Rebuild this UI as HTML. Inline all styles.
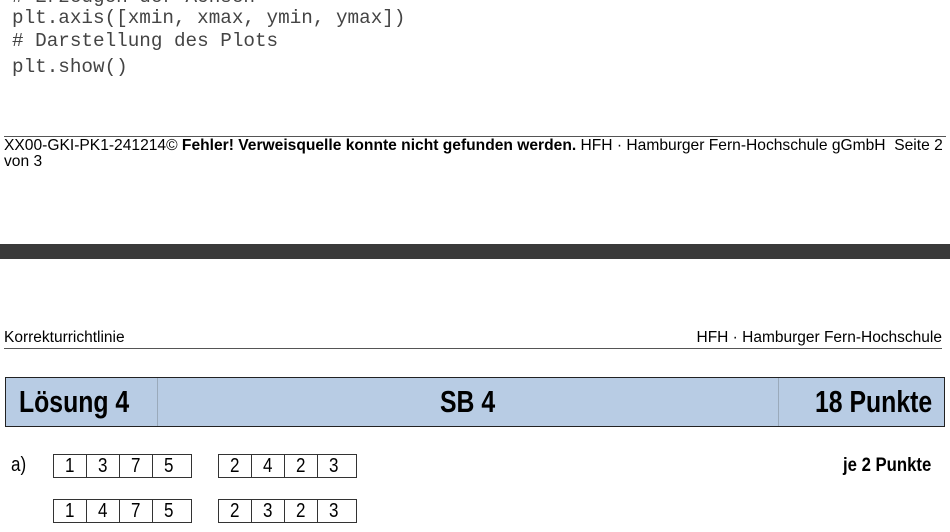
<!DOCTYPE html>
<html><head><meta charset="utf-8"><style>
body{margin:0;width:950px;height:532px;background:#fff;position:relative;overflow:hidden;font-family:"Liberation Sans",Arial,sans-serif;color:#000}
.a{position:absolute;white-space:nowrap}
.code{font-family:"Liberation Mono",monospace;font-size:19.3px;color:#444}
.n{font-weight:bold;transform-origin:0 0}
.cells{position:absolute;display:flex;height:22px;border:1px solid #333;border-right:none}
.cells div{width:33px;border-right:1px solid #333;font-size:20px;line-height:22px;padding-left:11px;box-sizing:border-box;font-family:"Liberation Sans",Arial,sans-serif}
.cells div:last-child{width:39px}
.cells span{display:inline-block;transform:scaleX(.85);transform-origin:0 0;font-family:"Liberation Sans",Arial,sans-serif}
</style></head><body>
<div class="a code" style="left:12px;top:-14px"># Erzeugen der Achsen</div>
<div class="a code" style="left:12px;top:7px">plt.axis([xmin, xmax, ymin, ymax])</div>
<div class="a code" style="left:12px;top:30px"># Darstellung des Plots</div>
<div class="a code" style="left:12px;top:56px">plt.show()</div>
<div class="a" style="left:4px;top:136px;width:942px;border-top:1px solid #555"></div>
<div class="a" style="left:4px;top:138px;font-size:15.6px;line-height:16px">XX00-GKI-PK1-241214© <b>Fehler! Verweisquelle konnte nicht gefunden werden.</b> HFH · Hamburger Fern-Hochschule gGmbH&nbsp; Seite 2<br>von 3</div>
<div class="a" style="left:0;top:244px;width:950px;height:15px;background:#3a3a3a"></div>
<div class="a" style="left:4px;top:329px;font-size:15.5px">Korrekturrichtlinie</div>
<div class="a" style="right:8px;top:329px;font-size:15.5px">HFH · Hamburger Fern-Hochschule</div>
<div class="a" style="left:4px;top:348px;width:938px;border-top:1px solid #555"></div>
<div class="a" style="left:5px;top:377px;width:940px;height:50px;background:#b8cce4;border:1px solid #222;box-sizing:border-box"></div>
<div class="a" style="left:157px;top:378px;height:48px;border-left:1px solid #9aaabb"></div>
<div class="a" style="left:778px;top:378px;height:48px;border-left:1px solid #9aaabb"></div>
<div class="a n" style="left:19px;top:384px;font-size:31px;transform:scaleX(.8)">Lösung 4</div>
<div class="a n" style="left:440px;top:384px;font-size:31px;transform:scaleX(.8)">SB 4</div>
<div class="a n" style="left:815px;top:384px;font-size:31px;transform:scaleX(.8)">18 Punkte</div>
<div class="a" style="left:11px;top:454px;font-size:20px;transform:scaleX(.85);transform-origin:0 0">a)</div>
<div class="a n" style="left:843px;top:455px;font-size:19px;transform:scaleX(.88)">je 2 Punkte</div>
<div class="cells" style="left:53px;top:454px"><div><span>1</span></div><div><span>3</span></div><div><span>7</span></div><div><span>5</span></div></div>
<div class="cells" style="left:218px;top:454px"><div><span>2</span></div><div><span>4</span></div><div><span>2</span></div><div><span>3</span></div></div>
<div class="cells" style="left:53px;top:499px"><div><span>1</span></div><div><span>4</span></div><div><span>7</span></div><div><span>5</span></div></div>
<div class="cells" style="left:218px;top:499px"><div><span>2</span></div><div><span>3</span></div><div><span>2</span></div><div><span>3</span></div></div>
</body></html>
